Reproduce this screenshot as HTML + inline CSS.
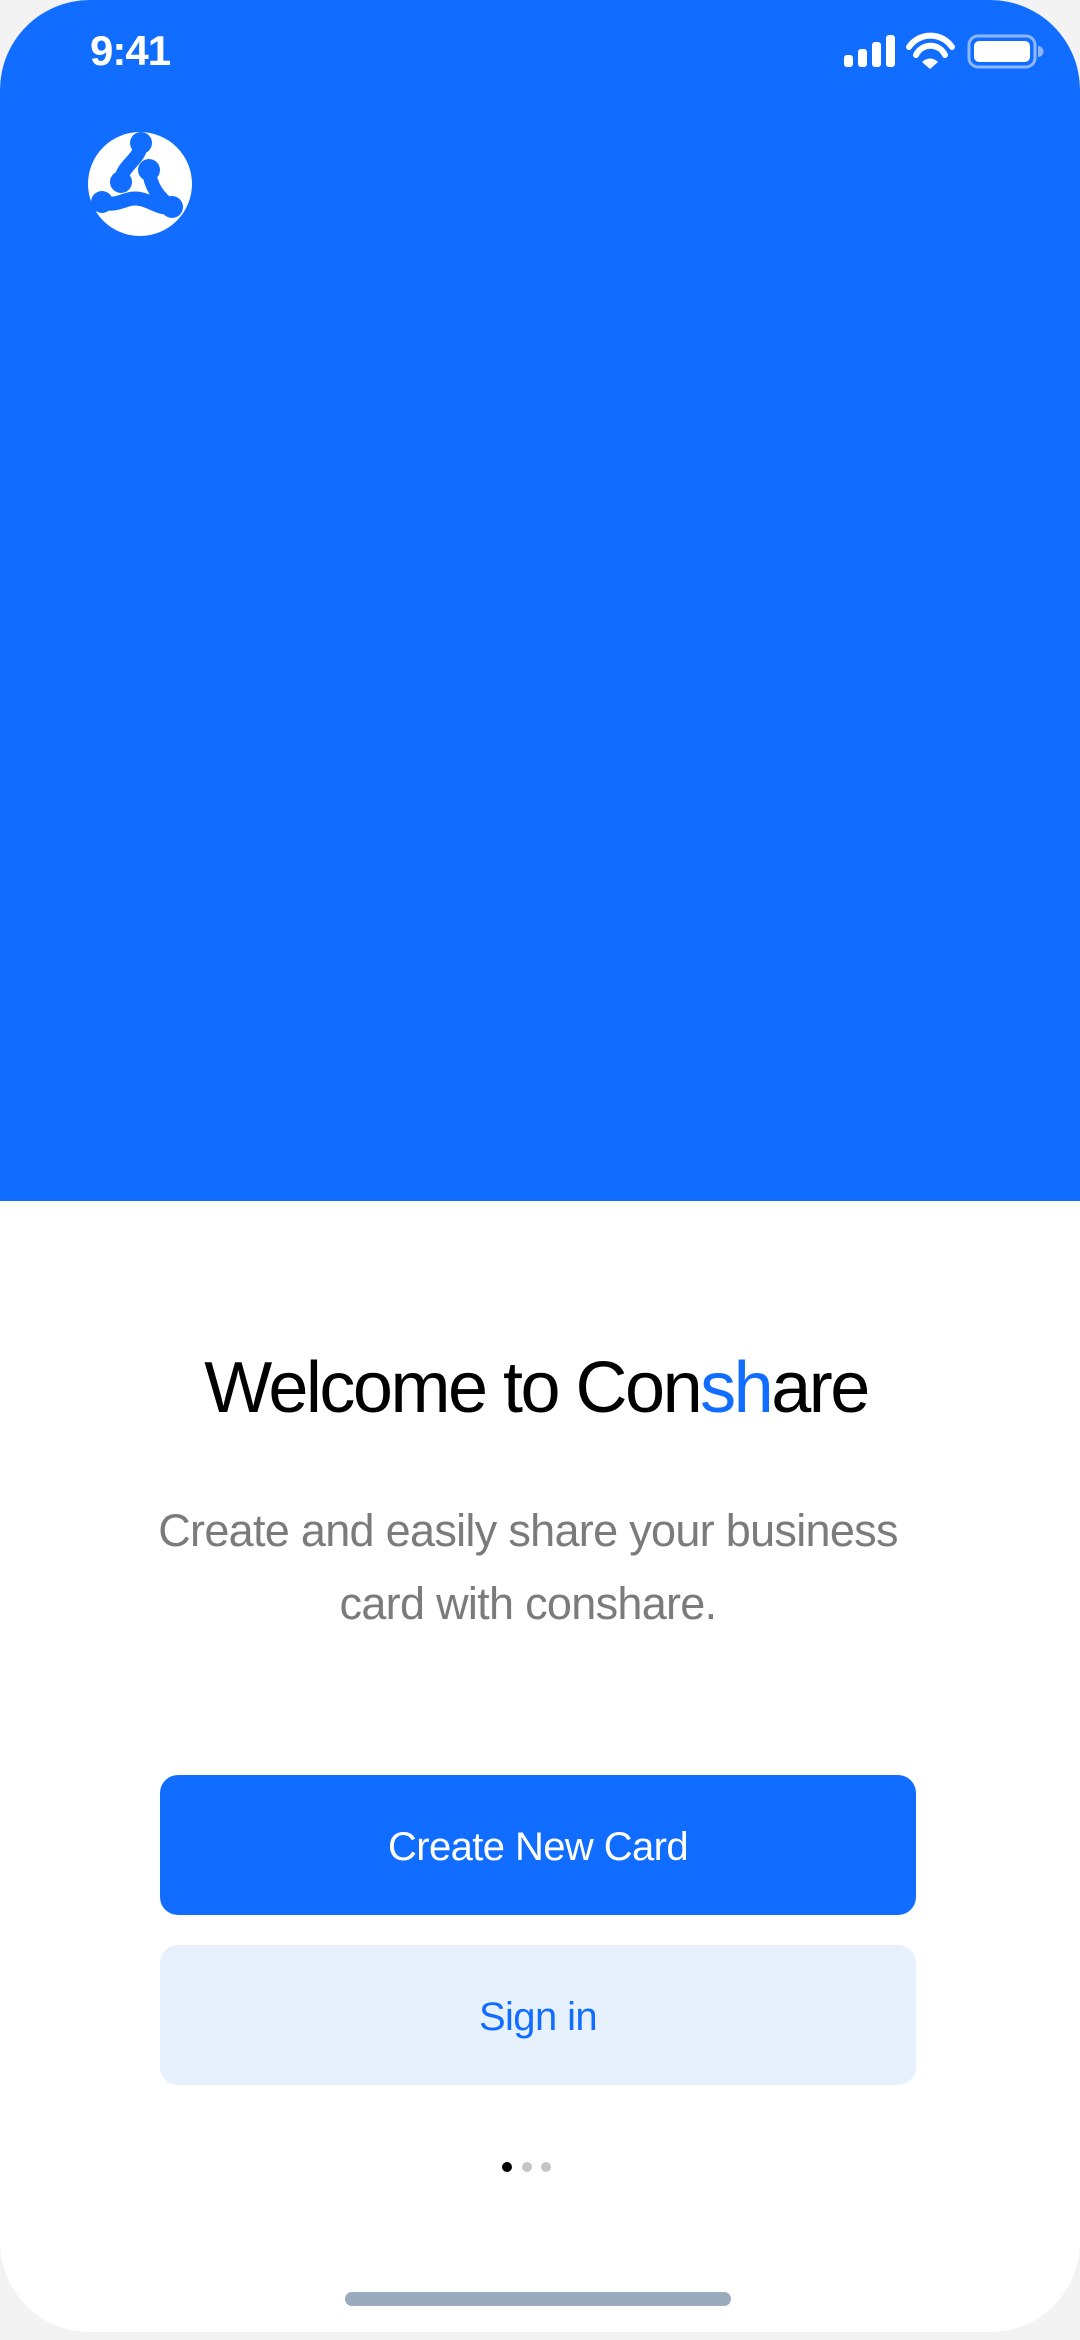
<!DOCTYPE html>
<html><head><meta charset="utf-8"><style>
html,body{margin:0;padding:0;width:1080px;height:2340px;background:#f2f3f2;overflow:hidden;font-family:"Liberation Sans",sans-serif}
.phone{position:absolute;left:0;top:0;width:1080px;height:2332px;background:#fff;border-radius:90px;overflow:hidden}
.hero{position:absolute;left:0;top:0;width:1080px;height:1201px;background:#116dff}
.time{position:absolute;left:90px;top:27px;color:#fff;font-size:42px;font-weight:bold;letter-spacing:-1px}
h1{position:absolute;top:1347px;left:-4px;width:1080px;text-align:center;margin:0;font-size:72px;font-weight:normal;letter-spacing:-2.5px;color:#000}
h1 span{color:#116dff}
.sub{position:absolute;top:1494px;left:-12px;width:1080px;text-align:center;font-size:45px;line-height:73px;color:#7b7b7e;letter-spacing:-0.7px}
.btn{position:absolute;left:160px;width:756px;height:140px;border-radius:18px;text-align:center;line-height:144px;font-size:40px;letter-spacing:-0.6px}
.b1{top:1775px;background:#116dff;color:#fff}
.b2{top:1945px;background:#e6f1fd;color:#116dff}
.dot{position:absolute;top:2162px;width:10px;height:10px;border-radius:5px;background:#c4c4c4}
.home{position:absolute;left:345px;top:2292px;width:386px;height:14px;border-radius:7px;background:#9aabbd}
</style></head><body>
<div class="phone">
<div class="hero">
<div class="time">9:41</div>
<svg style="position:absolute;left:840px;top:30px" width="210" height="42" viewBox="840 30 210 42">
<rect x="844" y="55" width="9" height="12" rx="3" fill="#fff"/>
<rect x="858" y="49" width="9" height="18" rx="3" fill="#fff"/>
<rect x="872" y="42" width="9" height="25" rx="3" fill="#fff"/>
<rect x="886" y="35" width="9" height="32" rx="3" fill="#fff"/>
<path d="M909 47 A26 26 0 0 1 952 47" stroke="#fff" stroke-width="6" fill="none" stroke-linecap="round"/>
<path d="M916 55 A16 16 0 0 1 945 55" stroke="#fff" stroke-width="6" fill="none" stroke-linecap="round"/>
<path d="M922 62 L930 69 L938 62 A11 11 0 0 0 922 62Z" fill="#fff"/>
<rect x="969" y="36" width="66" height="31" rx="9" fill="none" stroke="#8fb6ff" stroke-width="3"/>
<rect x="974" y="41" width="56" height="21" rx="5" fill="#fff"/>
<path d="M1038 46 A5 5 0 0 1 1038 57Z" fill="#8fb6ff"/>
</svg>
<svg style="position:absolute;left:86px;top:130px" width="108" height="108" viewBox="86 130 108 108">
<circle cx="140" cy="184" r="52" fill="#fff"/>
<g stroke="#116dff" stroke-width="14" stroke-linecap="round" fill="none">
<path d="M141 143 C141 160 121 165 121 182"/>
<path d="M102 202 C118 208 125 196 140 199 C152 201 160 210 172 207"/>
<path d="M149 170 C150 185 158 198 172 207"/>
</g>
<g fill="#116dff">
<circle cx="141" cy="143" r="11"/><circle cx="121" cy="182" r="11"/>
<circle cx="102" cy="202" r="11"/><circle cx="149" cy="170" r="11"/>
<circle cx="172" cy="207" r="11"/>
</g>
</svg>
</div>
<h1>Welcome to Con<span>sh</span>are</h1>
<div class="sub">Create and easily share your business<br>card with conshare.</div>
<div class="btn b1">Create New Card</div>
<div class="btn b2">Sign in</div>
<div class="dot" style="left:502px;background:#000"></div>
<div class="dot" style="left:522px"></div>
<div class="dot" style="left:541px"></div>
<div class="home"></div>
</div>
</body></html>
